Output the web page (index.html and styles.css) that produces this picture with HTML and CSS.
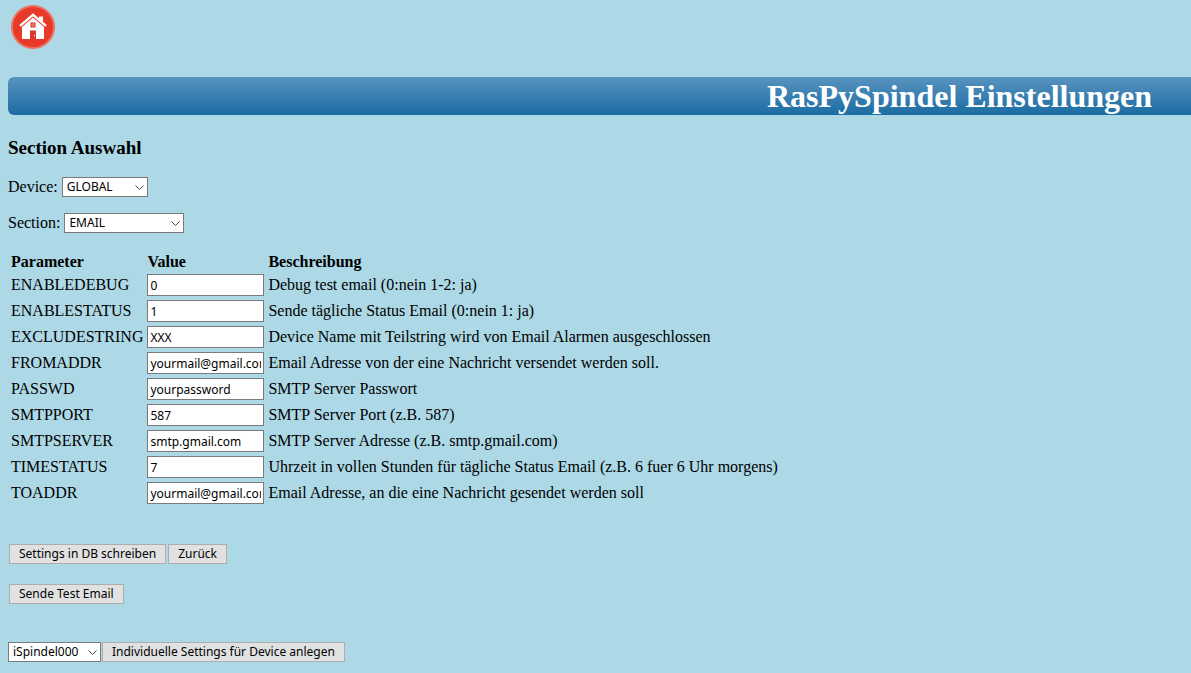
FILE: index.html
```html
<!DOCTYPE html>
<html lang="de">
<head>
<meta charset="utf-8">
<title>RasPySpindel Einstellungen</title>
<link rel="stylesheet" href="styles.css">
</head>
<body>
<a class="home" href="#" aria-label="Home">
  <svg width="50" height="50" viewBox="0 0 50 50" aria-hidden="true">
    <circle cx="25" cy="25" r="22" fill="#f0705f"/>
    <circle cx="25" cy="25" r="20" fill="#e83a29"/>
    <path d="M31 14.500h4v9l-4-4z" fill="#fff"/>
    <path d="M14 24L25 15l11 9v13H14z" fill="#fff"/>
    <path d="M12.500 25.300L25 14.800l12.500 10.500" fill="none" stroke="#e83a29" stroke-width="1.500"/>
    <path d="M12 23.800L25 12.800l13 11" fill="none" stroke="#fff" stroke-width="2.400"/>
    <path d="M22.500 20.500h5v5h-5zM22 28.500h6V37h-6z" fill="#d8392c"/>
    <path d="M25 20.500v5M22.500 23h5" stroke="#f7b5ad" stroke-width=".6"/>
    <path d="M26.500 32.500v2" stroke="#fff" stroke-width=".7"/>
  </svg>
</a>
<header class="banner"><h1>RasPySpindel Einstellungen</h1></header>
<main>
  <h2 class="heading">Section Auswahl</h2>
  <form class="settings">
    <div class="field">
      <label for="device">Device:</label>
      <span class="picker picker-device">
        <select id="device"><option>GLOBAL</option></select>
        <svg class="chevron" viewBox="0 0 9 6" aria-hidden="true"><path d="M.5 .5l4 4 4-4"/></svg>
      </span>
    </div>
    <div class="field">
      <label for="section">Section:</label>
      <span class="picker picker-section">
        <select id="section"><option>EMAIL</option></select>
        <svg class="chevron" viewBox="0 0 9 6" aria-hidden="true"><path d="M.5 .5l4 4 4-4"/></svg>
      </span>
    </div>
    <table class="params">
      <thead>
        <tr><th>Parameter</th><th>Value</th><th>Beschreibung</th></tr>
      </thead>
      <tbody>
        <tr><td><label for="p1">ENABLEDEBUG</label></td><td><input id="p1" type="text" value="0"></td><td>Debug test email (0:nein 1-2: ja)</td></tr>
        <tr><td><label for="p2">ENABLESTATUS</label></td><td><input id="p2" type="text" value="1"></td><td>Sende tägliche Status Email (0:nein 1: ja)</td></tr>
        <tr><td><label for="p3">EXCLUDESTRING</label></td><td><input id="p3" type="text" value="XXX"></td><td>Device Name mit Teilstring wird von Email Alarmen ausgeschlossen</td></tr>
        <tr><td><label for="p4">FROMADDR</label></td><td><input id="p4" type="text" value="yourmail@gmail.com"></td><td>Email Adresse von der eine Nachricht versendet werden soll.</td></tr>
        <tr><td><label for="p5">PASSWD</label></td><td><input id="p5" type="text" value="yourpassword"></td><td>SMTP Server Passwort</td></tr>
        <tr><td><label for="p6">SMTPPORT</label></td><td><input id="p6" type="text" value="587"></td><td>SMTP Server Port (z.B. 587)</td></tr>
        <tr><td><label for="p7">SMTPSERVER</label></td><td><input id="p7" type="text" value="smtp.gmail.com"></td><td>SMTP Server Adresse (z.B. smtp.gmail.com)</td></tr>
        <tr><td><label for="p8">TIMESTATUS</label></td><td><input id="p8" type="text" value="7"></td><td>Uhrzeit in vollen Stunden für tägliche Status Email (z.B. 6 fuer 6 Uhr morgens)</td></tr>
        <tr><td><label for="p9">TOADDR</label></td><td><input id="p9" type="text" value="yourmail@gmail.com"></td><td>Email Adresse, an die eine Nachricht gesendet werden soll</td></tr>
      </tbody>
    </table>
    <div class="actions">
      <button type="button">Settings in DB schreiben</button>
      <button type="button">Zurück</button>
    </div>
    <div class="actions actions-test">
      <button type="button">Sende Test Email</button>
    </div>
    <div class="create">
      <span class="picker picker-target">
        <select aria-label="Device"><option>iSpindel000</option></select>
        <svg class="chevron" viewBox="0 0 9 6" aria-hidden="true"><path d="M.5 .5l4 4 4-4"/></svg>
      </span>
      <button type="button">Individuelle Settings für Device anlegen</button>
    </div>
  </form>
</main>
</body>
</html>
```
FILE: styles.css
```css
* {
  box-sizing: border-box;
}

body {
  margin: 0;
  padding: 2px 0 8px 8px;
  background: #add8e6;
  color: #000;
  font: 16px/18px "Liberation Serif", "Times New Roman", serif;
}

.home {
  display: block;
  width: 50px;
  height: 50px;
}

.home svg {
  display: block;
}

.banner {
  margin-top: 25px;
  padding: 0 39px 0 8px;
  border-radius: 6px 0 0 6px;
  background: linear-gradient(#5893bf, #1b6ca3);
  color: #fff;
  text-align: right;
}

.banner h1 {
  margin: 0;
  font-size: 32px;
  line-height: 38px;
}

.heading {
  margin: 22px 0 18px;
  font-size: 19px;
  line-height: 22px;
}

.field {
  display: flex;
  align-items: center;
  gap: 4px;
  height: 20px;
  margin-bottom: 16px;
}

.picker {
  position: relative;
  display: inline-flex;
  height: 20px;
}

.picker-device {
  width: 86px;
}

.picker-section {
  width: 120px;
}

.picker-target {
  width: 93px;
}

select,
input,
button {
  margin: 0;
  border-radius: 0;
  color: #000;
  font: 12px/16px "Noto Sans", Tahoma, sans-serif;
}

select {
  width: 100%;
  height: 20px;
  padding: 0 14px 0 4px;
  border: 1px solid #7a7a7a;
  background: #fff;
  appearance: none;
}

.chevron {
  position: absolute;
  top: 8px;
  right: 4px;
  width: 9px;
  height: 6px;
  fill: none;
  stroke: #444;
  pointer-events: none;
}

.params {
  margin-top: 17px;
  border-spacing: 2px;
}

.params th,
.params td {
  padding: 1px;
  text-align: left;
  white-space: nowrap;
}

.params th {
  line-height: 17px;
}

.params input {
  display: block;
  width: 117px;
  height: 22px;
  padding: 1px 2px;
  border: 1px solid #7a7a7a;
  background: #fff;
}

button {
  height: 20px;
  padding: 0 9px;
  border: 1px solid #adadad;
  background: #e1e1e1;
  white-space: nowrap;
}

.actions {
  display: flex;
  gap: 2px;
  margin-top: 37px;
  padding-left: 1px;
}

.actions-test {
  margin-top: 20px;
}

.create {
  display: flex;
  gap: 1px;
  margin-top: 38px;
}
```
